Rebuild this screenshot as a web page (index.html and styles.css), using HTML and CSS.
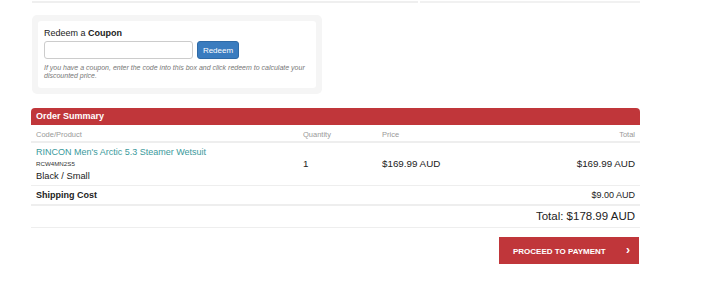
FILE: index.html
```html
<!DOCTYPE html>
<html lang="en">
<head>
    <meta charset="UTF-8">
    <title>Checkout</title>
    <link rel="stylesheet" href="styles.css">
</head>
<body>
    <div class="page">
        <!-- Bottom edge of the panel above -->
        <div class="panel-edge">
            <div class="edge-left"></div>
            <div class="edge-right"></div>
        </div>

        <!-- Coupon -->
        <div class="coupon-well">
            <div class="coupon-box">
                <h3 class="coupon-title">Redeem a <strong>Coupon</strong></h3>
                <form class="coupon-form" onsubmit="return false">
                    <input type="text" class="coupon-input">
                    <button type="submit" class="btn-redeem">Redeem</button>
                </form>
                <p class="coupon-help">If you have a coupon, enter the code into this box and click redeem to calculate your discounted price.</p>
            </div>
        </div>

        <!-- Order Summary -->
        <div class="summary">
            <div class="summary-head">Order Summary</div>
            <table class="summary-table">
                <thead>
                    <tr>
                        <th class="col-product">Code/Product</th>
                        <th class="col-qty">Quantity</th>
                        <th class="col-price">Price</th>
                        <th class="col-total">Total</th>
                    </tr>
                </thead>
                <tbody>
                    <tr class="item-row">
                        <td class="col-product">
                            <a href="#" class="item-name">RINCON Men's Arctic 5.3 Steamer Wetsuit</a>
                            <div class="item-code">RCW4MN2S5</div>
                            <div class="item-variant">Black / Small</div>
                        </td>
                        <td class="col-qty">1</td>
                        <td class="col-price">$169.99 AUD</td>
                        <td class="col-total">$169.99 AUD</td>
                    </tr>
                    <tr class="shipping-row">
                        <td class="col-product"><strong>Shipping Cost</strong></td>
                        <td></td>
                        <td></td>
                        <td class="col-total">$9.00 AUD</td>
                    </tr>
                    <tr class="total-row">
                        <td colspan="4" class="col-total">Total: $178.99 AUD</td>
                    </tr>
                </tbody>
            </table>
            <div class="actions">
                <button class="btn-proceed">Proceed to Payment <span class="chevron">&rsaquo;</span></button>
            </div>
        </div>
    </div>
</body>
</html>
```

FILE: styles.css
```css
/* Base */
* {
    margin: 0;
    padding: 0;
    box-sizing: border-box;
}

body {
    background: #fff;
    font-family: 'Liberation Sans', Arial, sans-serif;
    color: #333;
}

.page {
    width: 640px;
    padding-left: 31px;
}

/* Panel edge at the top */
.panel-edge {
    display: flex;
    gap: 2px;
    height: 3px;
    margin-left: 1px;
}

.edge-left {
    width: 386px;
    border-bottom: 2px solid #efefef;
}

.edge-right {
    flex: 1;
    border-bottom: 2px solid #f1f1f1;
}

/* Coupon */
.coupon-well {
    width: 290px;
    margin: 12px 0 0 1px;
    padding: 6px;
    background: #f5f5f5;
    border-radius: 5px;
}

.coupon-box {
    background: #fff;
    border-radius: 3px;
    padding: 5px 6px 8px 6px;
}

.coupon-title {
    font-size: 9px;
    font-weight: normal;
    line-height: 15px;
    color: #222;
}

.coupon-title strong {
    font-weight: bold;
}

.coupon-form {
    display: flex;
    gap: 4px;
}

.coupon-input {
    width: 149px;
    height: 18px;
    border: 1px solid #ccc;
    border-radius: 3px;
}

.btn-redeem {
    width: 42px;
    height: 18px;
    background: #3a7cbf;
    border: 1px solid #2f6aa6;
    border-radius: 3px;
    color: #fff;
    font-family: inherit;
    font-size: 8px;
}

.coupon-help {
    margin-top: 5px;
    font-size: 7px;
    line-height: 8px;
    font-style: italic;
    color: #777;
}

/* Order summary */
.summary {
    margin-top: 14px;
    width: 609px;
}

.summary-head {
    height: 17px;
    line-height: 17px;
    padding-left: 5px;
    background: #c0363a;
    border-radius: 4px 4px 0 0;
    color: #fff;
    font-size: 9px;
    font-weight: bold;
}

.summary-table {
    width: 100%;
    border-collapse: collapse;
    font-size: 9.8px;
}

.summary-table th {
    height: 17px;
    padding-top: 2px;
    font-size: 7.5px;
    font-weight: normal;
    color: #999;
    text-align: left;
    border-bottom: 2px solid #eee;
}

.summary-table td {
    vertical-align: middle;
    color: #222;
}

.col-product {
    width: 272px;
    padding-left: 5px;
}

.col-qty {
    width: 79px;
}

.summary-table .col-total {
    text-align: right;
    padding-right: 5px;
}

.item-row td {
    height: 43px;
    border-bottom: 1px solid #eee;
}

.item-name {
    display: block;
    color: #3a9a9c;
    text-decoration: none;
    font-size: 9px;
    line-height: 12px;
}

.item-code {
    font-size: 6.2px;
    line-height: 12px;
    color: #333;
}

.item-variant {
    font-size: 9.3px;
    line-height: 12px;
}

.shipping-row td {
    height: 20px;
    font-size: 9px;
    border-bottom: 2px solid #eee;
}

.total-row td {
    height: 22px;
    font-size: 11.5px;
    border-bottom: 1px solid #eee;
}

/* Actions */
.actions {
    display: flex;
    justify-content: flex-end;
    padding: 9px 1px 0 0;
}

.btn-proceed {
    width: 140px;
    height: 27px;
    padding-left: 14px;
    background: #c0363a;
    border: none;
    color: #fff;
    font-family: inherit;
    font-size: 8px;
    font-weight: bold;
    text-align: left;
    text-transform: uppercase;
}

.chevron {
    margin-left: 18px;
    font-size: 12px;
}
```
